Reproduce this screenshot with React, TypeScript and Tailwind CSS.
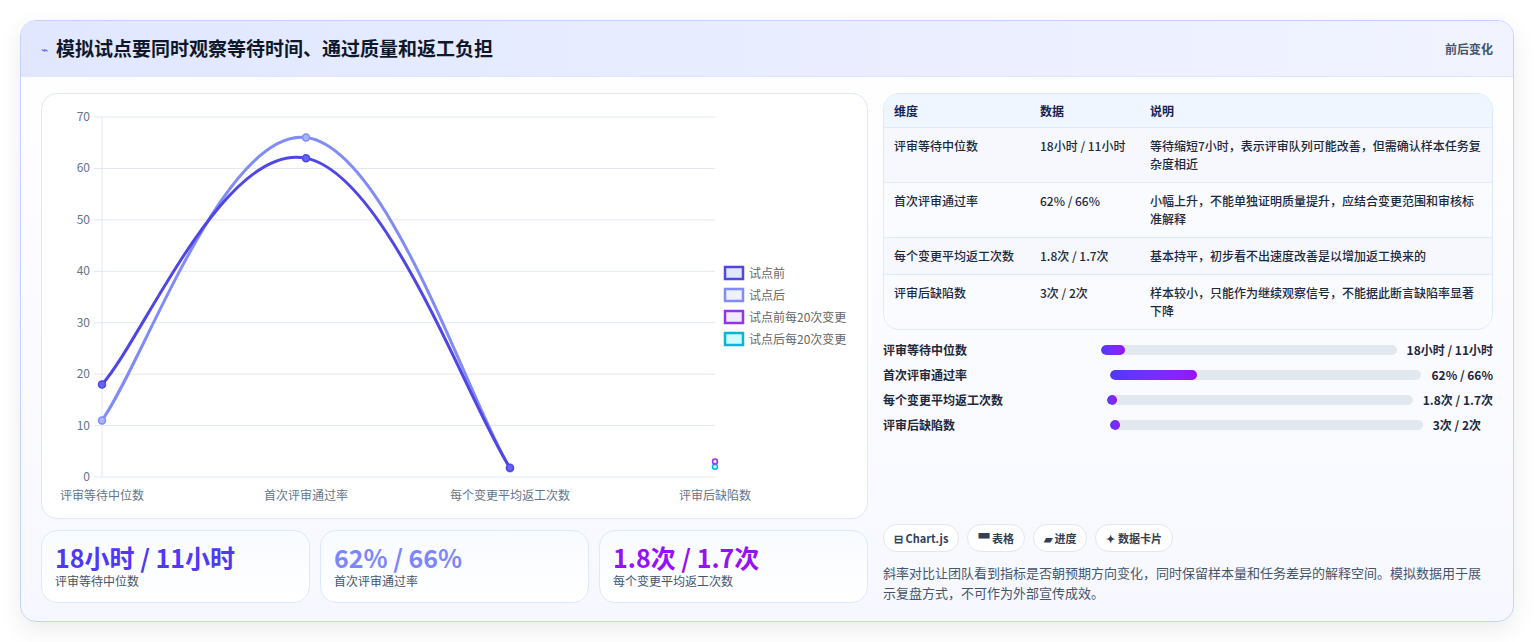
import React from 'react';

const F = '"Noto Sans CJK SC", "Noto Sans", sans-serif';

const rows = [
  { k: '评审等待中位数', v: '18小时 / 11小时', d: '等待缩短7小时，表示评审队列可能改善，但需确认样本任务复杂度相近' },
  { k: '首次评审通过率', v: '62% / 66%', d: '小幅上升，不能单独证明质量提升，应结合变更范围和审核标准解释' },
  { k: '每个变更平均返工次数', v: '1.8次 / 1.7次', d: '基本持平，初步看不出速度改善是以增加返工换来的' },
  { k: '评审后缺陷数', v: '3次 / 2次', d: '样本较小，只能作为继续观察信号，不能据此断言缺陷率显著下降' },
];

const bars = [
  { k: '评审等待中位数', v: '18小时 / 11小时', w: '8%', pad: 'pl-[218px]', pr: 'pr-0' },
  { k: '首次评审通过率', v: '62% / 66%', w: '28%', pad: 'pl-[227px]', pr: 'pr-0' },
  { k: '每个变更平均返工次数', v: '1.8次 / 1.7次', w: '3%', pad: 'pl-[224px]', pr: 'pr-0' },
  { k: '评审后缺陷数', v: '3次 / 2次', w: '3%', pad: 'pl-[227px]', pr: 'pr-[12px]' },
];

const xs = [60, 264, 468, 673];
const Y = (v: number) => 383 - (v * 360) / 70;

function curve(vals: number[]) {
  const p = vals.map((v, i) => [xs[i], Y(v)]);
  let d = `M${p[0][0]},${p[0][1]}`;
  for (let i = 0; i < p.length - 1; i++) {
    const p0 = p[i - 1] || p[i];
    const p1 = p[i];
    const p2 = p[i + 1];
    const p3 = p[i + 2] || p2;
    const t = 0.4 / 2;
    const c1 = [p1[0] + (p2[0] - p0[0]) * t, p1[1] + (p2[1] - p0[1]) * t];
    const c2 = [p2[0] - (p3[0] - p1[0]) * t, p2[1] - (p3[1] - p1[1]) * t];
    d += ` C${c1[0]},${c1[1]} ${c2[0]},${c2[1]} ${p2[0]},${p2[1]}`;
  }
  return d;
}

function Chart() {
  const before = [18, 62, 1.8];
  const after = [11, 66, 1.7];
  const labels = ['评审等待中位数', '首次评审通过率', '每个变更平均返工次数', '评审后缺陷数'];
  const legend = [
    { t: '试点前', s: '#4f46e5', f: '#e0e7ff' },
    { t: '试点后', s: '#818cf8', f: '#eef2ff' },
    { t: '试点前每20次变更', s: '#9333ea', f: '#f3e8ff' },
    { t: '试点后每20次变更', s: '#06b6d4', f: '#cffafe' },
  ];
  return (
    <svg width="827" height="426" style={{ fontFamily: F }}>
      {[0, 10, 20, 30, 40, 50, 60, 70].map(v => (
        <g key={v}>
          <line x1={52} x2={673} y1={Y(v)} y2={Y(v)} stroke="#e2e8f0" />
          <text x={48} y={Y(v) + 4} fontSize="12" fill="#64748b" textAnchor="end">{v}</text>
        </g>
      ))}
      <line x1={60} x2={60} y1={23} y2={383} stroke="#e2e8f0" />
      {labels.map((l, i) => (
        <text key={l} x={xs[i]} y={406} fontSize="12" fill="#64748b" textAnchor="middle">{l}</text>
      ))}
      <path d={curve(after)} fill="none" stroke="#818cf8" strokeWidth="3" />
      <path d={curve(before)} fill="none" stroke="#4f46e5" strokeWidth="3" />
      {after.map((v, i) => <circle key={'a' + i} cx={xs[i]} cy={Y(v)} r="3.5" fill="#a5b4fc" stroke="#818cf8" strokeWidth="1.5" />)}
      {before.map((v, i) => <circle key={'b' + i} cx={xs[i]} cy={Y(v)} r="3.5" fill="#6366f1" stroke="#4f46e5" strokeWidth="1.5" />)}
      <circle cx={673} cy={Y(2)} r="2.5" fill="#cffafe" stroke="#06b6d4" strokeWidth="1.5" />
      <circle cx={673} cy={Y(3)} r="2.5" fill="#f3e8ff" stroke="#9333ea" strokeWidth="1.5" />
      {legend.map((l, i) => (
        <g key={l.t}>
          <rect x={683} y={173 + i * 22} width={18} height={12} fill={l.f} stroke={l.s} strokeWidth="2.5" />
          <text x={707} y={184 + i * 22} fontSize="12" fill="#666">{l.t}</text>
        </g>
      ))}
    </svg>
  );
}

export default function App() {
  return (
    <div className="min-h-[642px] bg-white p-5 pb-5" style={{ fontFamily: F }}>
      <div className="rounded-2xl border border-indigo-200 bg-gradient-to-b from-white to-[#f7f8ff] shadow-[0_8px_24px_rgba(0,0,0,0.08)] overflow-hidden">
        <div className="flex items-center justify-between h-[56px] px-5 bg-gradient-to-r from-indigo-100 to-[#f1f3ff] border-b border-indigo-100">
          <div className="flex items-center gap-2">
            <span className="text-indigo-500 text-xs">⌁</span>
            <h1 className="text-[19px] font-bold text-slate-900">模拟试点要同时观察等待时间、通过质量和返工负担</h1>
          </div>
          <span className="text-xs font-semibold text-slate-600">前后变化</span>
        </div>
        <div className="flex gap-[15px] px-5 pt-4 pb-[18px]">
          <div className="w-[827px] flex flex-col gap-[11px]">
            <div className="h-[426px] rounded-2xl border border-indigo-100 bg-white overflow-hidden">
              <Chart />
            </div>
            <div className="grid grid-cols-3 gap-[10px]">
              {[
                { v: '18小时 / 11小时', k: '评审等待中位数', c: 'text-indigo-600' },
                { v: '62% / 66%', k: '首次评审通过率', c: 'text-indigo-400' },
                { v: '1.8次 / 1.7次', k: '每个变更平均返工次数', c: 'text-purple-600' },
              ].map(c => (
                <div key={c.k} className="h-[73px] rounded-2xl border border-blue-100 bg-gradient-to-b from-[#f8fbff] to-white px-[13px] pt-[10px]">
                  <div className={`text-[25px] leading-[32px] font-bold ${c.c}`}>{c.v}</div>
                  <div className="text-xs text-slate-600">{c.k}</div>
                </div>
              ))}
            </div>
          </div>
          <div className="flex-1 flex flex-col">
            <div className="rounded-2xl border border-blue-100 bg-[#f8faff] overflow-hidden text-xs">
              <div className="grid grid-cols-[146px_110px_1fr] px-[10px] h-[34px] items-center bg-[#f0f6ff] border-b border-blue-100 font-semibold text-blue-950">
                <span>维度</span><span>数据</span><span>说明</span>
              </div>
              {rows.map((r, i) => (
                <div key={r.k} className={`grid grid-cols-[146px_110px_1fr] px-[10px] py-[9px] leading-[18px] text-slate-800 font-medium ${i < 3 ? 'border-b border-blue-100' : ''} ${i % 2 === 0 ? 'bg-[#f7f8fe]' : 'bg-[#fafbff]'}`}>
                  <span>{r.k}</span><span>{r.v}</span><span>{r.d}</span>
                </div>
              ))}
            </div>
            <div className="mt-[10px] flex flex-col gap-[6px]">
              {bars.map(b => (
                <div key={b.k} className={`relative flex items-center h-[19px] text-xs font-semibold text-slate-800 ${b.pr}`}>
                  <span className="absolute left-0">{b.k}</span>
                  <div className={`flex-1 flex items-center gap-[10px] ${b.pad}`}>
                    <div className="flex-1 h-[10px] rounded-full bg-slate-200 overflow-hidden">
                      <div className="h-full rounded-full bg-gradient-to-r from-indigo-600 to-purple-600 min-w-[10px]" style={{ width: b.w }} />
                    </div>
                    <span className="font-bold whitespace-nowrap">{b.v}</span>
                  </div>
                </div>
              ))}
            </div>
            <div className="mt-auto">
              <div className="flex gap-[8px] text-[11px] font-semibold text-slate-700">
                {['⊟ Chart.js', '▀ 表格', '▰ 进度', '✦ 数据卡片'].map(t => (
                  <span key={t} className="h-[28px] px-[10px] flex items-center rounded-full border border-slate-200 bg-white">{t}</span>
                ))}
              </div>
              <p className="mt-[11px] text-[13px] leading-[20px] text-slate-600">斜率对比让团队看到指标是否朝预期方向变化，同时保留样本量和任务差异的解释空间。模拟数据用于展示复盘方式，不可作为外部宣传成效。</p>
            </div>
          </div>
        </div>
      </div>
    </div>
  );
}
